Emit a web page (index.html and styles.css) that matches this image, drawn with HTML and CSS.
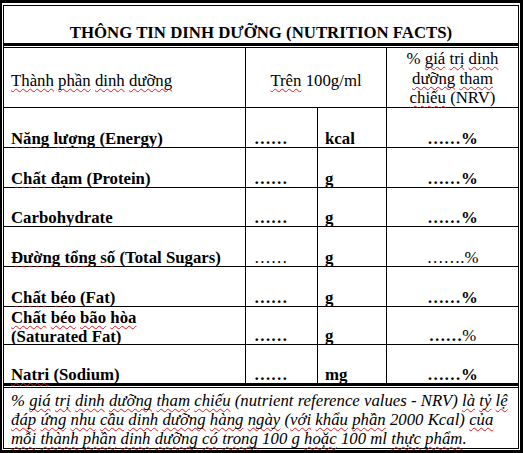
FILE: index.html
```html
<!DOCTYPE html>
<html lang="vi">
<head>
<meta charset="utf-8">
<title>Nutrition Facts</title>
<link rel="stylesheet" href="styles.css">
</head>
<body>
<div class="frame">
  <div class="box">
    <div class="title"><div>THÔNG TIN DINH DƯỠNG (NUTRITION FACTS)</div></div>
    <div class="grid">
      <div class="cell hd"><div><span class="sp">Thành</span> <span class="sp">phần</span> <span class="sp">dinh</span> <span class="sp">dưỡng</span></div></div>
      <div class="cell hd span2"><div><span class="sp">Trên</span> 100g/ml</div></div>
      <div class="cell hd c4"><div>% <span class="sp">giá</span> <span class="sp">trị</span> <span class="sp">dinh</span><br><span class="sp">dưỡng</span> <span class="sp">tham</span><br><span class="sp">chiếu</span> (NRV)</div></div>

      <div class="cell b"><div><span class="sp">Năng</span> <span class="sp">lượng</span> (Energy)</div></div>
      <div class="cell b dots"><div>……</div></div>
      <div class="cell b"><div>kcal</div></div>
      <div class="cell b c4"><div>……%</div></div>

      <div class="cell b"><div><span class="sp">Chất</span> <span class="sp">đạm</span> (Protein)</div></div>
      <div class="cell b dots"><div>……</div></div>
      <div class="cell b"><div>g</div></div>
      <div class="cell b c4"><div>……%</div></div>

      <div class="cell b"><div>Carbohydrate</div></div>
      <div class="cell b dots"><div>……</div></div>
      <div class="cell b"><div>g</div></div>
      <div class="cell b c4"><div>……%</div></div>

      <div class="cell b"><div><span class="sp">Đường</span> <span class="sp">tổng</span> <span class="sp">số</span> (Total Sugars)</div></div>
      <div class="cell dots"><div>……</div></div>
      <div class="cell b"><div>g</div></div>
      <div class="cell c4"><div>…….%</div></div>

      <div class="cell b"><div><span class="sp">Chất</span> <span class="sp">béo</span> (Fat)</div></div>
      <div class="cell b dots"><div>……</div></div>
      <div class="cell b"><div>g</div></div>
      <div class="cell b c4"><div>……%</div></div>

      <div class="cell b two"><div><span class="sp">Chất</span> <span class="sp">béo</span> <span class="sp">bão</span> <span class="sp">hòa</span><br>(Saturated Fat)</div></div>
      <div class="cell b dots"><div>……</div></div>
      <div class="cell b"><div>g</div></div>
      <div class="cell c4"><div><b>……</b>%</div></div>

      <div class="cell b"><div><span class="sp">Natri</span> (Sodium)</div></div>
      <div class="cell b dots"><div>……</div></div>
      <div class="cell b"><div>mg</div></div>
      <div class="cell b c4"><div>……%</div></div>
    </div>
    <div class="note">% <span class="sp">giá</span> <span class="sp">trị</span> <span class="sp">dinh</span> <span class="sp">dưỡng</span> <span class="sp">tham</span> <span class="sp">chiếu</span> (nutrient reference values - NRV) <span class="sp">là</span> <span class="sp">tỷ</span> <span class="sp">lệ</span><br><span class="sp">đáp</span> <span class="sp">ứng</span> <span class="sp">nhu</span> <span class="sp">cầu</span> <span class="sp">dinh</span> <span class="sp">dưỡng</span> <span class="sp">hàng</span> <span class="sp">ngày</span> (<span class="sp">với</span> <span class="sp">khẩu</span> <span class="sp">phần</span> 2000 Kcal) <span class="sp">của</span><br><span class="sp">mỗi</span> <span class="sp">thành</span> <span class="sp">phần</span> <span class="sp">dinh</span> <span class="sp">dưỡng</span> <span class="sp">có</span> <span class="sp">trong</span> 100 g <span class="sp">hoặc</span> 100 ml <span class="sp">thực</span> <span class="sp">phẩm</span>.</div>
  </div>
</div>
</body>
</html>
```

FILE: styles.css
```css
html, body {
  margin: 0;
  padding: 0;
  background: #fff;
}

body {
  width: 523px;
  font-family: "Liberation Serif", "Times New Roman", serif;
  font-size: 16.8px;
  color: #000;
}

.frame {
  box-sizing: border-box;
  width: 523px;
  height: 453px;
  border: 3px solid #000;
  border-left-width: 2px;
  padding: 2px 1px 1px 1px;
}

.box {
  border: 1px solid #000;
}

.title {
  height: 37px;
  border-bottom: 3px solid #000;
  display: flex;
  align-items: flex-end;
  justify-content: center;
  font-weight: bold;
  line-height: normal;
}

.grid {
  margin-top: 1px;
  border-top: 1px solid #000;
  border-bottom: 3px solid #000;
  background: #000;
  display: grid;
  grid-template-columns: 241px 71px 68px 131px;
  grid-template-rows: 59px 39px 39px 38px 39px 39px 37px 38px;
  gap: 1px;
}

.cell {
  box-sizing: border-box;
  background: #fff;
  display: flex;
  align-items: flex-end;
  padding: 0 7px;
  line-height: normal;
  white-space: nowrap;
}

.cell > div {
  margin-bottom: -2px;
}

.cell.hd {
  align-items: center;
  padding-top: 6px;
}

.cell.hd > div {
  margin-bottom: 0;
}

.cell.span2 {
  grid-column: span 2;
  justify-content: center;
}

.cell.c4 {
  justify-content: center;
  text-align: center;
}

.cell.hd.c4 {
  line-height: 19.5px;
  padding-top: 2px;
}

.cell.dots {
  padding-left: 8px;
}

.cell.two {
  line-height: 18.5px;
}

.b {
  font-weight: bold;
}

.note {
  margin-top: 1px;
  border-top: 1px solid #000;
  box-sizing: border-box;
  height: 61px;
  padding: 3px 7px 0 7px;
  font-style: italic;
  line-height: 19px;
  white-space: nowrap;
}

.sp {
  text-decoration-line: underline;
  text-decoration-style: wavy;
  text-decoration-color: #e8141c;
  text-decoration-thickness: 1px;
  text-underline-offset: 2px;
  text-decoration-skip-ink: none;
}
```
